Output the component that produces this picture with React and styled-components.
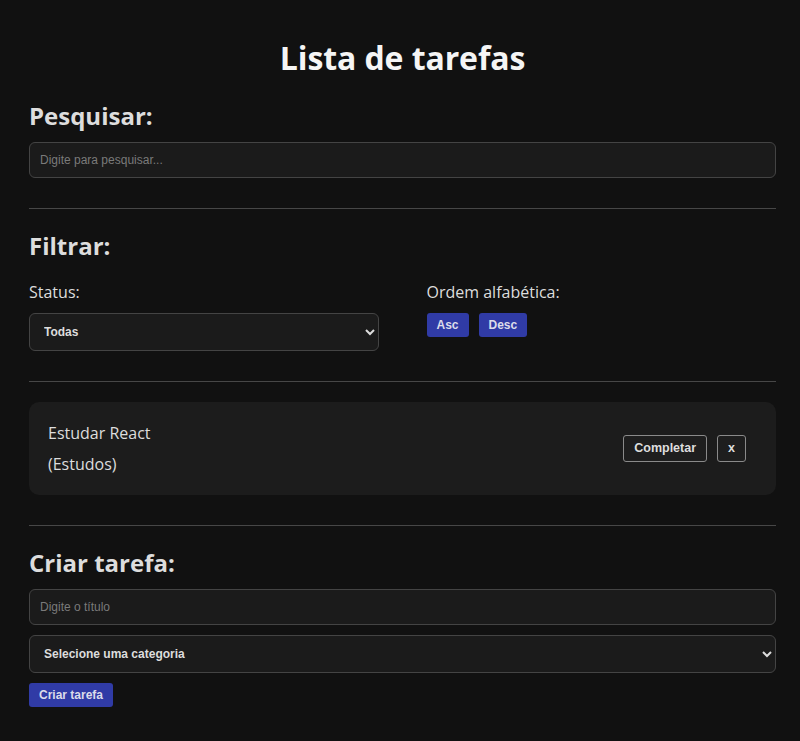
import React from "react";
import styled, { createGlobalStyle } from "styled-components";

const GlobalStyle = createGlobalStyle`
  body {
    margin: 0;
    background-color: #111111;
    color: #dddddd;
    font-family: "Open Sans", "Noto Sans", sans-serif;
  }
  * {
    box-sizing: border-box;
  }
`;

const Page = styled.main`
  padding: 36px 24px 40px 29px;
  display: flex;
  flex-direction: column;
`;

const Title = styled.h1`
  margin: 0 0 20px;
  text-align: center;
  font-size: 32px;
  font-weight: 700;
  letter-spacing: -0.1px;
  color: #f5f5f5;
`;

const Section = styled.section`
  display: flex;
  flex-direction: column;
  gap: 10px;
`;

const SectionTitle = styled.h2`
  margin: 0;
  font-size: 24px;
  font-weight: 700;
  color: #dddddd;
`;

const Divider = styled.hr`
  margin: 30px 0 20px;
  border: none;
  height: 1px;
  background-color: #474747;
`;

const TextInput = styled.input`
  width: 100%;
  height: 36px;
  padding: 0 10px;
  background-color: #1b1b1b;
  border: 1px solid #444;
  border-radius: 6px;
  color: #ddd;
  font-family: "Liberation Sans", Arial, sans-serif;
  font-size: 12px;
  outline: none;
  &::placeholder {
    color: #7a7a7a;
  }
`;

const Select = styled.select`
  width: 100%;
  height: 38px;
  padding: 0 10px;
  background-color: #1b1b1b;
  border: 1px solid #444;
  border-radius: 6px;
  color: #dddddd;
  color-scheme: dark;
  font-family: "Liberation Sans", Arial, sans-serif;
  font-size: 12px;
  font-weight: 700;
`;

const FilterGrid = styled.div`
  margin-top: 9px;
  display: grid;
  grid-template-columns: 1fr 1fr;
  column-gap: 48px;
`;

const Field = styled.div`
  display: flex;
  flex-direction: column;
  gap: 10px;
`;

const Label = styled.label`
  font-size: 16px;
  color: #dddddd;
`;

const ButtonRow = styled.div`
  display: flex;
  gap: 10px;
`;

const SolidButton = styled.button`
  align-self: flex-start;
  padding: 5px 10px;
  border: none;
  border-radius: 3px;
  background-color: #303ba6;
  color: #dcdcea;
  font-family: "Liberation Sans", Arial, sans-serif;
  font-size: 12px;
  font-weight: 700;
  line-height: 14px;
  cursor: pointer;
`;

const OutlineButton = styled.button`
  padding: 5px 10px;
  border: 1px solid #8a8a8a;
  border-radius: 3px;
  background-color: #1e1e1e;
  color: #dddddd;
  font-family: "Liberation Sans", Arial, sans-serif;
  font-size: 12.5px;
  font-weight: 700;
  line-height: 15px;
  cursor: pointer;
`;

const TaskCard = styled.div`
  display: flex;
  align-items: center;
  justify-content: space-between;
  padding: 20px 30px 20px 19px;
  background-color: #1c1c1c;
  border-radius: 10px;
`;

const TaskInfo = styled.div`
  display: flex;
  flex-direction: column;
  gap: 9px;
  font-size: 16px;
  color: #dddddd;
`;

const TaskActions = styled.div`
  display: flex;
  gap: 10px;
`;

const tasks = [{ id: 1, title: "Estudar React", category: "Estudos" }];

export default function App() {
  return (
    <>
      <GlobalStyle />
      <Page>
        <Title>Lista de tarefas</Title>

        <Section>
          <SectionTitle>Pesquisar:</SectionTitle>
          <TextInput placeholder="Digite para pesquisar..." />
        </Section>

        <Divider />

        <Section>
          <SectionTitle>Filtrar:</SectionTitle>
          <FilterGrid>
            <Field>
              <Label>Status:</Label>
              <Select defaultValue="all">
                <option value="all">Todas</option>
                <option value="done">Completas</option>
                <option value="todo">Incompletas</option>
              </Select>
            </Field>
            <Field>
              <Label>Ordem alfabética:</Label>
              <ButtonRow>
                <SolidButton>Asc</SolidButton>
                <SolidButton>Desc</SolidButton>
              </ButtonRow>
            </Field>
          </FilterGrid>
        </Section>

        <Divider />

        {tasks.map((task) => (
          <TaskCard key={task.id}>
            <TaskInfo>
              <span>{task.title}</span>
              <span>({task.category})</span>
            </TaskInfo>
            <TaskActions>
              <OutlineButton>Completar</OutlineButton>
              <OutlineButton>x</OutlineButton>
            </TaskActions>
          </TaskCard>
        ))}

        <Divider />

        <Section>
          <SectionTitle>Criar tarefa:</SectionTitle>
          <TextInput placeholder="Digite o título" />
          <Select defaultValue="">
            <option value="">Selecione uma categoria</option>
            <option value="Trabalho">Trabalho</option>
            <option value="Pessoal">Pessoal</option>
            <option value="Estudos">Estudos</option>
          </Select>
          <SolidButton>Criar tarefa</SolidButton>
        </Section>
      </Page>
    </>
  );
}
